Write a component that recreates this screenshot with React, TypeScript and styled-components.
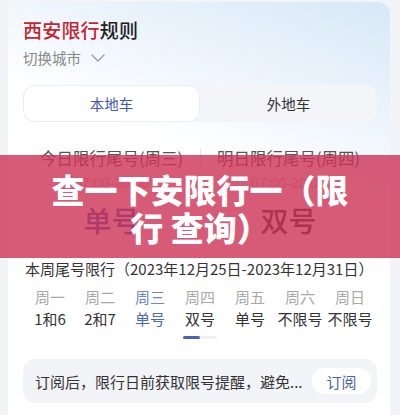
import React from "react";
import styled, { createGlobalStyle } from "styled-components";

const Global = createGlobalStyle`
  html, body { margin: 0; padding: 0; background: #f3f4f8; }
  body { font-family: "Noto Sans CJK SC", "Noto Sans", sans-serif; width: 400px; height: 415px; overflow: hidden; }
  * { box-sizing: border-box; }
`;

const Page = styled.div`
  position: relative;
  width: 400px;
  height: 415px;
  padding: 2px 10px 0 8px;
  overflow: hidden;
`;

const Card = styled.div`
  background: linear-gradient(200deg, #d6e8f7 0%, #eef5fc 22%, #ffffff 38%);
  border-radius: 12px 12px 0 0;
  padding: 16px 13px 20px 15px;
  height: 440px;
  display: flex;
  flex-direction: column;
`;

const Title = styled.div`
  font-size: 19px;
  line-height: 24px;
  font-weight: 500;
  color: #222;
  letter-spacing: 0.2px;
`;

const Red = styled.span`
  color: #c3262d;
`;

const CitySwitch = styled.div`
  margin-top: 6px;
  font-size: 14.5px;
  line-height: 20px;
  color: #888;
  display: flex;
  align-items: center;
  gap: 10px;
`;

const Tabs = styled.div`
  margin-top: 17px;
  height: 37px;
  background: #f4f5f9;
  border-radius: 12px;
  display: grid;
  grid-template-columns: 1fr 1fr;
`;

const Tab = styled.div<{ $active?: boolean }>`
  display: flex;
  align-items: center;
  justify-content: center;
  font-size: 14.5px;
  border-radius: 12px;
  color: ${(p) => (p.$active ? "#3f5aae" : "#333")};
  background: ${(p) => (p.$active ? "#fff" : "transparent")};
  border: 1px solid ${(p) => (p.$active ? "#eceef3" : "transparent")};
`;

const Compare = styled.div`
  margin-top: 25px;
  display: grid;
  grid-template-columns: 1fr 1fr;
  position: relative;
`;

const Divider = styled.div`
  position: absolute;
  left: 50%;
  top: 2px;
  width: 1px;
  height: 18px;
  background: #e2e4ea;
`;

const CompareCol = styled.div`
  display: flex;
  flex-direction: column;
  align-items: center;
`;

const CompareLabel = styled.div`
  font-size: 16.5px;
  line-height: 22px;
  color: #555;
`;

const CompareTime = styled.div`
  margin-top: 4px;
  font-size: 14px;
  line-height: 18px;
  color: #bbb;
`;

const CompareValue = styled.div<{ $blue?: boolean }>`
  margin-top: 12px;
  font-size: 28px;
  line-height: 34px;
  font-weight: 500;
  color: ${(p) => (p.$blue ? "#3b58b2" : "#333")};
`;

const WeekTitle = styled.div`
  margin-top: 21px;
  font-size: 15px;
  line-height: 22px;
  color: #333;
  white-space: nowrap;
  margin-left: 2px;
`;

const WeekGrid = styled.div`
  margin-top: 6px;
  display: grid;
  grid-template-columns: repeat(7, 50px);
  padding-left: 2px;
`;

const DayCell = styled.div<{ $blue?: boolean; $dim?: boolean }>`
  text-align: center;
  font-size: 15px;
  line-height: 22px;
  white-space: nowrap;
  color: ${(p) =>
    p.$blue ? (p.$dim ? "#6f86cc" : "#4a66c0") : p.$dim ? "#a8a8a8" : "#333"};
`;

const Track = styled.div`
  margin: 6px auto 0;
  width: 34px;
  height: 3px;
  border-radius: 2px;
  background: #eef0f5;
  display: flex;
`;

const Thumb = styled.div`
  width: 17px;
  height: 3px;
  border-radius: 2px;
  background: #4a62bb;
`;

const Subscribe = styled.div`
  margin-top: 20px;
  height: 44px;
  background: #f3f4f8;
  border-radius: 12px;
  display: flex;
  align-items: center;
  justify-content: space-between;
  padding: 0 6px 0 12px;
`;

const SubText = styled.div`
  font-size: 15px;
  color: #333;
  white-space: nowrap;
`;

const SubButton = styled.div`
  width: 59px;
  height: 26px;
  border-radius: 13px;
  background: #fff;
  color: #4a62a8;
  font-size: 15px;
  display: flex;
  align-items: center;
  justify-content: center;
`;

const Banner = styled.div`
  position: absolute;
  left: 0;
  right: 0;
  top: 155px;
  height: 103px;
  background: rgba(205, 50, 85, 0.8);
  display: flex;
  align-items: center;
  justify-content: center;
  padding: 0 40px;
`;

const BannerText = styled.div`
  color: #fff;
  font-size: 33px;
  line-height: 38px;
  font-weight: 900;
  text-align: center;
  margin-top: 2px;
`;

const days = ["周一", "周二", "周三", "周四", "周五", "周六", "周日"];
const vals = ["1和6", "2和7", "单号", "双号", "单号", "不限号", "不限号"];

export default function App() {
  return (
    <Page>
      <Global />
      <Card>
        <Title>
          <Red>西安限行</Red>规则
        </Title>
        <CitySwitch>
          切换城市
          <svg width="14" height="8" viewBox="0 0 14 8" fill="none">
            <path d="M1 1l6 6 6-6" stroke="#999" strokeWidth="1.3" strokeLinecap="round" strokeLinejoin="round" />
          </svg>
        </CitySwitch>
        <Tabs>
          <Tab $active>本地车</Tab>
          <Tab>外地车</Tab>
        </Tabs>
        <Compare>
          <Divider />
          <CompareCol>
            <CompareLabel>今日限行尾号(周三)</CompareLabel>
            <CompareTime>07:00-20:00</CompareTime>
            <CompareValue $blue>单号</CompareValue>
          </CompareCol>
          <CompareCol>
            <CompareLabel>明日限行尾号(周四)</CompareLabel>
            <CompareTime>07:00-20:00</CompareTime>
            <CompareValue>双号</CompareValue>
          </CompareCol>
        </Compare>
        <WeekTitle>本周尾号限行（2023年12月25日-2023年12月31日）</WeekTitle>
        <WeekGrid>
          {days.map((d, i) => (
            <DayCell key={d} $dim $blue={i === 2}>
              {d}
            </DayCell>
          ))}
          {vals.map((v, i) => (
            <DayCell key={i} $blue={i === 2}>
              {v}
            </DayCell>
          ))}
        </WeekGrid>
        <Track>
          <Thumb />
        </Track>
        <Subscribe>
          <SubText>订阅后，限行日前获取限号提醒，避免...</SubText>
          <SubButton>订阅</SubButton>
        </Subscribe>
      </Card>
      <Banner>
        <BannerText>查一下安限行一（限行 查询）</BannerText>
      </Banner>
    </Page>
  );
}
